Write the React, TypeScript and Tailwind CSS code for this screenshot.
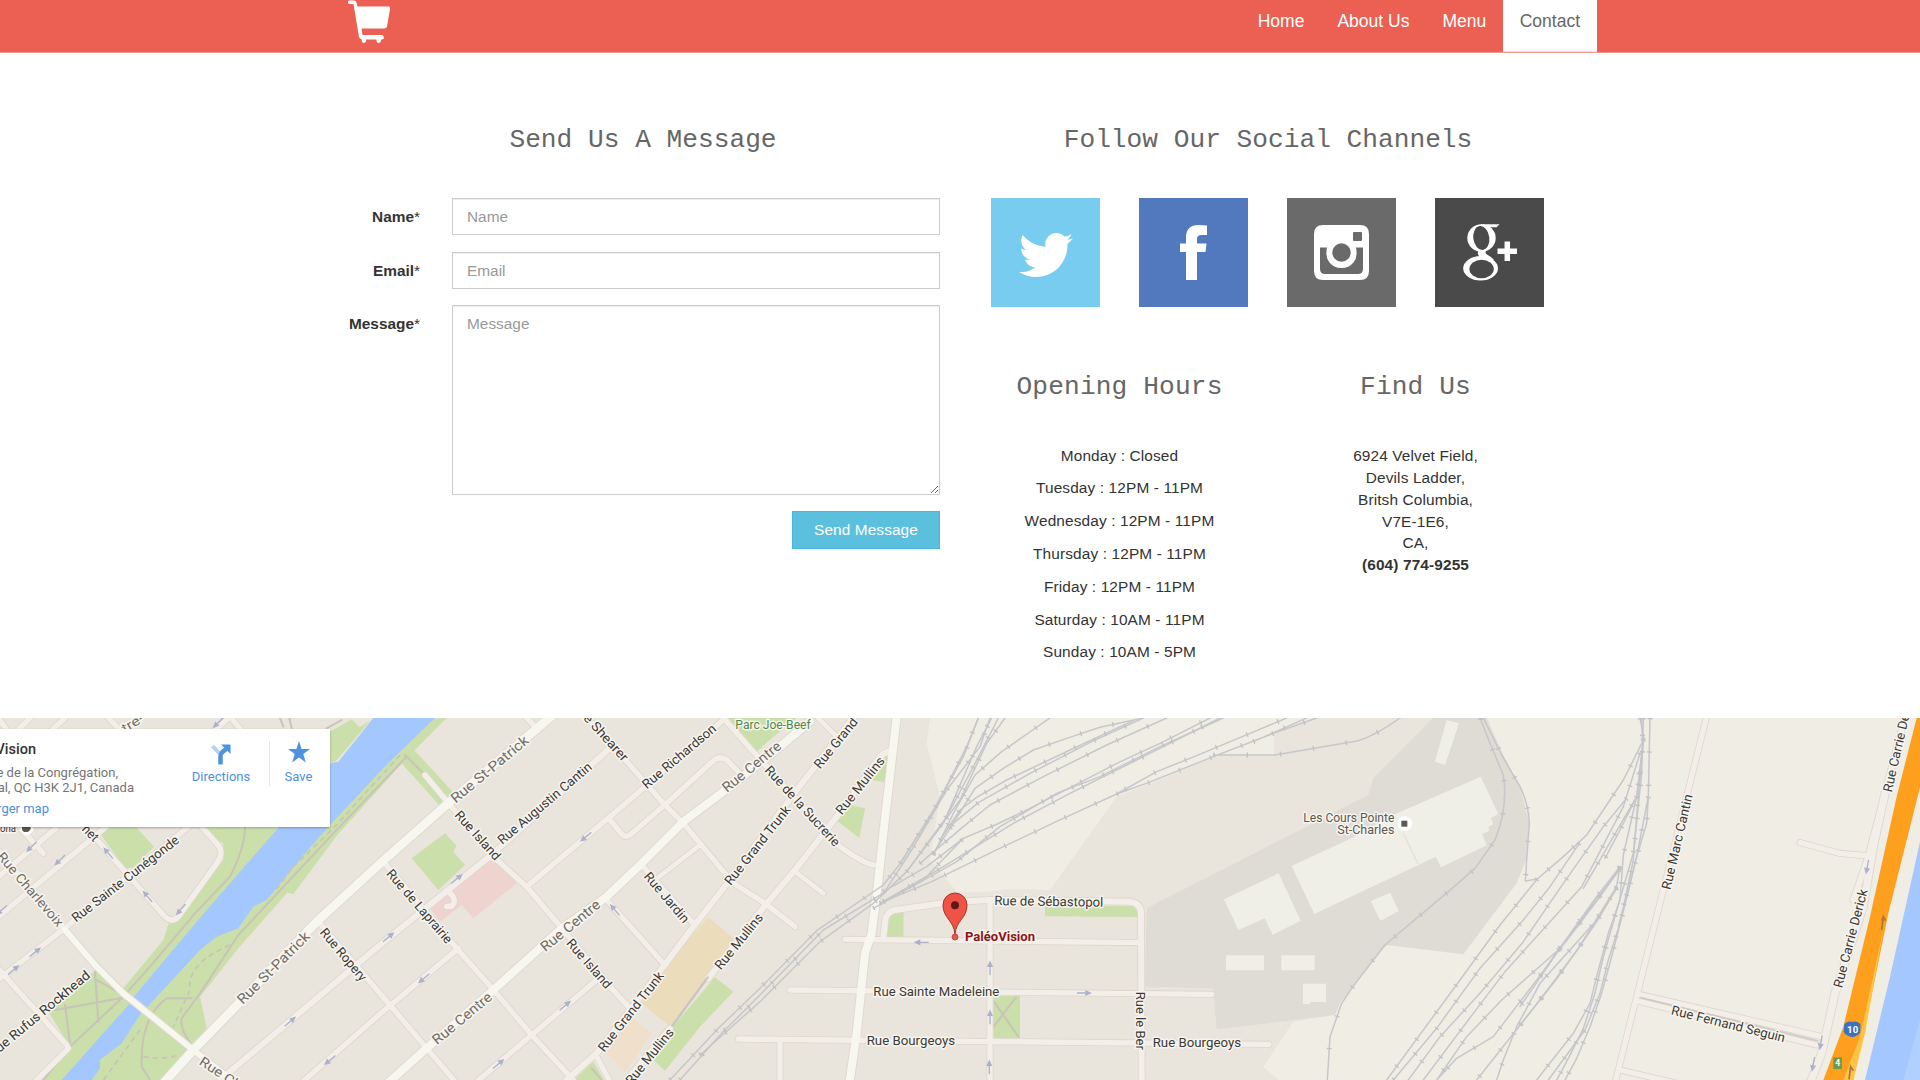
import React from "react";
import { FaTwitter } from "react-icons/fa";

type Shape = { o: number; d: string; w?: number; c?: string };
type LabelSpec = { o: number; t: string; p: [number, number, number, number]; c?: string; s?: number; b?: boolean };

// Map geometry is kept in third-of-a-pixel units; `o` shifts a sheet to the right.
const areas: Shape[] = [
  { o: 0, c: "#cadfaa", d: "M590 383L835 383L1200 60L1340 54L1215 180L1012 405L880 582L862 578L715 745L600 890L620 985L575 1045L490 1140L130 1140L210 1040L145 935L285 812L370 865L490 720L505 672L530 660L670 480L670 430Z" },
  { o: 0, c: "#e9e5dc", d: "M990 54L1118 54L1005 188L990 188Z" },
  { o: 0, c: "#cadfaa", d: "M990 95L1055 58L1078 82L1110 62L1008 183L990 190Z" },
  { o: 0, c: "#cadfaa", d: "M300 400L320 383L410 383L462 440L400 503L375 505Z" },
  { o: 0, c: "#a5c7ff", d: "M1120 54L1305 54L1200 155L1140 215L990 375L915 460L800 600L760 620L715 685L650 710L600 750L420 945L365 1030L300 1080L300 1105L275 1140L185 1140L385 915L410 880L590 665L835 383L990 190L1015 185Z" },
  { o: 1140, c: "#cadfaa", d: "M65 190L100 148L218 275L180 318Z" },
  { o: 1140, c: "#cadfaa", d: "M95 475L195 400L230 437L220 455L255 495L175 570Z" },
  { o: 1140, c: "#efd3cf", d: "M320 465L345 475L410 550L280 655L245 615L180 665L150 625Z" },
  { o: 1140, c: "#ebdcbb", d: "M985 652L1060 715L985 830L870 980L785 910L850 800Z" },
  { o: 1140, c: "#f0dfcb", d: "M745 945L815 1000L735 1117L680 1060Z" },
  { o: 1140, c: "#cadfaa", d: "M1005 832L1060 875L960 980L855 1112L820 1080L870 990Z" },
  { o: 1140, c: "#cadfaa", d: "M580 1140L640 1085L672 1140Z" },
  { o: 2280, c: "#cadfaa", d: "M-95 54L110 54L40 110L-10 155Z" },
  { o: 2280, c: "#cadfaa", d: "M382 165L377 247L330 240Z" },
  { o: 2280, c: "#cadfaa", d: "M270 315L315 325L298 414L228 360Z" },
  { o: 2280, c: "#cadfaa", d: "M385 640L431 633L430 716L378 715Z" },
  { o: 2280, c: "#cadfaa", d: "M855 618L1131 618L1131 651L855 649Z" },
  { o: 2280, c: "#cadfaa", d: "M700 888L780 888L780 1014L700 1014Z" },
  { o: 2280, c: "#f0ede5", d: "M510 54L500 130L540 290L510 480L590 575L690 575L750 566L870 570L1070 290L1180 247L1380 165L1542 165L1542 95L1660 54Z" },
  { o: 3420, c: "#dfdbd5", d: "M880 54L700 235L685 285L20 625L15 860L220 865L230 988L585 945L1000 850L1300 500L1200 54Z" },
  { o: 3420, c: "#f0ede5", d: "M1040 54L1090 165L1140 260L1168 370L1158 480L1130 550L970 763L740 735L600 910L585 945L460 965L370 1100L415 1140L2340 1140L2340 54Z" },
  { o: 3420, c: "#f0efe7", d: "M920 60L957 70L915 195L885 185ZM1022 230L1075 342L1052 355L1060 372L1045 380L1048 392L1026 402L1040 436L903 502L887 470L523 642L455 498L640 412L760 345ZM252 598L416 520L482 662L398 704L374 655L295 690ZM692 604L750 578L776 632L722 662ZM258 766H372V811H258ZM424 766H524V811H424ZM489 851H558V906H510V912H489Z" },
  { o: 4560, c: "#a5c7ff", d: "M1200 425L1110 830L1035 1140L1200 1140Z" },
  { o: 4560, c: "#b2d0ff", d: "M1200 960L1150 1140L1200 1140Z" },
];

const roads: Shape[] = [
  { o: 0, w: 16, d: "M-10 800L200 1035L205 1045L100 1150" },
  { o: 0, w: 16, d: "M-20 850L200 680L590 360" },
  { o: 0, w: 16, d: "M-10 655L330 370" },
  { o: 0, w: 16, d: "M-10 535L170 383" },
  { o: 0, w: 16, d: "M60 383L130 460" },
  { o: 0, w: 16, d: "M230 350L490 645Q515 672 535 650L650 490Q675 455 650 430L600 375" },
  { o: 0, w: 16, d: "M-5 150L90 54M150 95L195 54M325 54L370 100M635 100L690 50L740 110M0 60L20 90" },
  { o: 0, w: 18, d: "M-20 435L195 690" },
  { o: 0, w: 18, d: "M660 1140L1140 735L1480 460L1840 135" },
  { o: 0, w: 16, d: "M880 1170L1140 942L1375 745" },
  { o: 0, w: 16, d: "M955 665L1170 915L1280 1045L1370 1150" },
  { o: 0, w: 16, d: "M1150 485L1370 745L1485 875L1595 1005L1720 1140" },
  { o: 1140, w: 16, d: "M135 225L210 315L345 475L440 560L550 690L690 860L745 920" },
  { o: 1140, w: 16, d: "M205 575Q235 600 215 618L200 620" },
  { o: 1140, w: 16, d: "M440 560L690 350L1030 60" },
  { o: 1140, w: 16, d: "M690 360L725 402Q735 414 750 405L860 310L1000 182Q1020 165 1040 180L1080 220" },
  { o: 1140, w: 16, d: "M600 30L745 190L850 310L910 370L1060 550L1155 610L1245 680" },
  { o: 1140, w: 16, d: "M440 54L475 90" },
  { o: 1140, w: 14, d: "M835 532L960 435" },
  { o: 1140, w: 16, d: "M785 495L940 670" },
  { o: 1140, w: 16, d: "M675 595L850 790" },
  { o: 1140, w: 16, d: "M290 1145L455 1005L650 840" },
  { o: 1140, w: 16, d: "M650 1070L690 1145" },
  { o: 1140, w: 18, d: "M740 1140L870 985" },
  { o: 1140, w: 18, d: "M560 1140L650 1060L850 800L940 680L1050 540L1250 270L1420 54" },
  { o: 2280, w: 18, d: "M-155 835L20 610L105 510L230 350L360 170Q375 155 400 150" },
  { o: 2280, w: 16, d: "M-110 54L20 200L240 440Q310 490 340 495" },
  { o: 2280, w: 14, d: "M105 515L190 580M175 54L230 110" },
  { o: 2280, w: 18, d: "M370 715L376 660Q380 635 405 630L580 605L690 600L1110 605Q1145 610 1143 645L1145 1140" },
  { o: 2280, w: 16, d: "M255 718L1145 728M90 870L1355 883M-65 1017L1527 1033M690 600V1140M60 1020V1140" },
  { o: 4560, w: 16, d: "M560 50L500 290L430 570L285 1150M365 885L905 1010M360 905L890 1035M300 1110L470 1150" },
  { o: 4560, w: 16, d: "M840 428L960 460L1050 468" },
  { o: 4560, w: 18, d: "M1155 50L1095 280L1045 470L1000 600" },
  { o: 4560, w: 22, d: "M1095 280L1060 440L1030 620L945 880L905 1060L870 1150" },
];

const mainRoads: Shape[] = [
  { o: 0, w: 26, d: "M490 1150L580 1050L740 885L950 665L1150 482L1350 305L1660 44" },
  { o: 0, w: 18, d: "M195 690L290 800L370 880L580 1050L700 1145" },
  { o: 1140, w: 24, d: "M0 1170L140 1045L340 870L540 690L680 590L780 495L910 365L1050 260L1200 140L1290 64" },
  { o: 2280, w: 24, d: "M268 1150L290 1000L315 760L335 700L355 540L370 400L410 50" },
];

const rails: Shape[] = [
  { o: 2280, d: "M-270 1140L-125 985L0 865L170 692L370 555L425 485L530 315L620 140L655 54" },
  { o: 2280, d: "M-240 1140L-115 1000L0 885L190 690L372 578L455 450L560 270L660 140L690 54" },
  { o: 2280, d: "M-180 1065L0 905L180 725L340 610L440 515L560 350L640 200L715 54" },
  { o: 2280, d: "M420 490L510 350L610 170L655 54M440 515L550 370L650 140L695 54M500 435L600 300L680 130L735 54" },
  { o: 2280, d: "M520 465L580 340L645 225L725 155L870 54" },
  { o: 2280, d: "M570 385L645 265L730 205L820 150L920 115L1020 82L1150 54" },
  { o: 2280, d: "M540 420L600 330L650 292L740 240L930 150L1120 62" },
  { o: 2280, d: "M520 460L580 370L655 308L810 220L995 125L1150 54" },
  { o: 2280, d: "M480 490L610 380L690 315L850 230L1040 135L1220 54" },
  { o: 2280, d: "M370 605L490 540L610 415L705 375L810 325L1075 188L1200 130L1350 54" },
  { o: 2280, d: "M370 575L500 500L610 415M360 610L550 500L760 370L930 280L1150 170L1380 54" },
  { o: 2280, d: "M340 625L590 485L720 380L890 280L1020 230L1200 140L1390 54" },
  { o: 2280, d: "M370 605L515 545L705 452L895 362L1070 282L1190 215L1290 175L1470 100L1580 54" },
  { o: 2280, d: "M1070 282L1165 248L1360 170L1540 100L1670 54M1360 165L1545 165L1795 122Q1850 105 1920 54M1480 125L1640 54" },
  { o: 3420, d: "M1020 54L1050 130L1090 225Q1105 320 1065 420L1005 505L925 575L770 705L730 740L635 865L605 910L570 1010L562 1140" },
  { o: 3420, d: "M1030 54L1085 165L1140 260Q1165 310 1168 370L1160 480L1156 543L1192 537L1270 470L1340 405L1450 240L1508 125L1505 54" },
  { o: 3420, d: "M1192 537L1080 675L960 840L740 1140M1318 430L1230 560L1150 660L1020 805L890 985L760 1140" },
  { o: 3420, d: "M1460 295L1390 380L1270 550L1150 725L1020 880L900 1010L805 1140" },
  { o: 3420, d: "M1500 160L1450 320L1325 560L1095 815L1000 940L850 1140M1510 120L1490 290L1330 565" },
  { o: 3420, d: "M1440 500L1370 590L1205 820L1060 1010L950 1075L890 1140M1438 510L1255 750L1085 900L980 1010L890 1140" },
  { o: 3420, d: "M1440 500L1430 560L1375 655L1200 850L1130 980L1090 1080L1070 1140M1430 560L1315 745L1200 900L1010 1140" },
  { o: 4560, d: "M360 54L372 115L350 290L310 465L300 600L265 700L235 810L210 910L160 1000L50 1140" },
  { o: 4560, d: "M370 54L365 220L340 460L305 580L250 770L225 880L190 985L145 1075L110 1140" },
  { o: 4560, d: "M390 54L385 290L380 370L350 470L325 575L275 770L245 880L210 980L170 1075L135 1140" },
  { o: 4560, d: "M370 115L350 350L340 480L300 670L265 780L240 880L195 990L85 1140M385 290L350 470L295 680M350 290L300 390L255 475" },
  { o: 4560, d: "M300 505L240 590L180 670L110 760L0 920M290 565L230 665L175 745L115 830L0 975" },
];

const paths: Shape[] = [
  { o: 0, d: "M1220 170L1000 400L715 705L600 880L545 955Q538 985 575 1035" },
  { o: 0, d: "M735 383Q735 440 690 530L585 640L450 800L370 890L210 1040L130 1140" },
  { o: 0, d: "M285 815L295 965M290 840L370 885M165 930L360 895M195 915L210 1030M575 895L500 895Q420 950 425 1100L450 1140" },
  { o: 1140, d: "M75 165L135 225M875 980L985 830M635 1105L665 1140" },
  { o: 2280, d: "M702 905L775 1010M768 892L702 978" },
  { o: 0, d: "M840 54L850 80M868 54L875 85M980 85L1025 60" },
];

const arrows: [number, number, number][] = [
  [655, 68, 135], [95, 440, 135], [180, 480, 135], [325, 460, -130], [443, 590, -130], [543, 628, 130], [105, 757, -40],
  [40, 810, -40], [1165, 712, -40], [870, 965, -40], [990, 1080, 140], [5, 630, 140], [1370, 537, -40], [1272, 835, 140],
  [1758, 410, 140], [1845, 630, -130], [1695, 917, -40], [1495, 1092, -40], [2765, 727, 180], [2970, 805, -90],
  [2970, 952, -90], [2968, 1102, -90], [3252, 879, 0], [5602, 500, 100], [5463, 1027, 100], [5440, 1092, 100],
];

const G = "#716d67";
const labels: LabelSpec[] = [
  { o: 0, t: "Rue Charlevoix", p: [0, 462, 183, 675], c: G, s: 40 },
  { o: 0, t: "Rue Sainte Cunégonde", p: [220, 658, 532, 415] },
  { o: 0, t: "Rue Rufus Rockhead", p: [-30, 1065, 265, 820] },
  { o: 0, t: "Rue St-Patrick", p: [718, 905, 922, 702], c: G, s: 42 },
  { o: 0, t: "Rue Ropery", p: [968, 690, 1093, 838] },
  { o: 0, t: "Rue Charlevoix", p: [602, 1080, 850, 1245], c: G, s: 40 },
  { o: 0, t: "tre-", p: [368, 88, 428, 50], c: G },
  { o: 0, t: "net", p: [253, 380, 290, 418] },
  { o: 0, t: "ona", p: [0, 385, 48, 385], s: 32 },
  { o: 1140, t: "Rue St-Patrick", p: [218, 300, 440, 115], c: G, s: 42 },
  { o: 1140, t: "Rue Island", p: [232, 338, 355, 475] },
  { o: 1140, t: "Rue Augustin Cantin", p: [358, 425, 630, 195] },
  { o: 1140, t: "Rue Shearer", p: [585, 10, 738, 178] },
  { o: 1140, t: "Rue Richardson", p: [792, 258, 1003, 80] },
  { o: 1140, t: "Rue Centre", p: [1032, 268, 1198, 132], c: G, s: 42 },
  { o: 1140, t: "Rue Centre", p: [487, 746, 655, 608], c: G, s: 42 },
  { o: 1140, t: "Rue Centre", p: [162, 1025, 330, 885], c: G, s: 42 },
  { o: 1140, t: "Rue de Laprairie", p: [27, 513, 210, 725] },
  { o: 1140, t: "Rue Jardin", p: [800, 522, 920, 663] },
  { o: 1140, t: "Rue Island", p: [567, 722, 688, 860] },
  { o: 1140, t: "Rue Grand Trunk", p: [662, 1050, 843, 820] },
  { o: 1140, t: "Rue Mullins", p: [745, 1148, 873, 990] },
  { o: 1140, t: "Rue Mullins", p: [1012, 803, 1141, 645] },
  { o: 1140, t: "Rue Grand Trunk", p: [1042, 550, 1223, 322] },
  { o: 1140, t: "Parc Joe-Beef", p: [1066, 74, 1292, 74], c: "#4f8a4a" },
  { o: 2280, t: "Rue Grand", p: [170, 200, 285, 58] },
  { o: 2280, t: "Rue Mullins", p: [235, 338, 366, 175] },
  { o: 2280, t: "Rue de la Sucrerie", p: [22, 203, 233, 433] },
  { o: 2280, t: "Rue de Sébastopol", p: [703, 602, 1030, 607] },
  { o: 2280, t: "PaléoVision", p: [615, 710, 825, 710], c: "#8f1414", b: true },
  { o: 2280, t: "Rue Sainte Madeleine", p: [340, 875, 718, 875] },
  { o: 2280, t: "Rue Bourgeoys", p: [320, 1022, 585, 1022] },
  { o: 2280, t: "Rue le Ber", p: [1140, 875, 1140, 1050] },
  { o: 3420, t: "Les Cours Pointe", p: [490, 352, 763, 352], c: "#5d5852" },
  { o: 3420, t: "St-Charles", p: [592, 388, 763, 388], c: "#5d5852" },
  { o: 3420, t: "Rue Bourgeoys", p: [38, 1029, 303, 1029] },
  { o: 4560, t: "Rue Marc Cantin", p: [438, 568, 505, 283] },
  { o: 4560, t: "Rue Carrie Derick", p: [953, 862, 1030, 568] },
  { o: 4560, t: "Rue Carrie Derick", p: [1102, 275, 1170, -20] },
  { o: 4560, t: "Rue Fernand Seguin", p: [455, 930, 795, 1014] },
];

function Label({ o, t, p, c = "#3d3934", s = 39, b }: LabelSpec) {
  const [x1, y1, x2, y2] = p;
  const len = Math.hypot(x2 - x1, y2 - y1);
  const angle = (Math.atan2(y2 - y1, x2 - x1) * 180) / Math.PI;
  return (
    <text
      transform={`translate(${o + x1} ${y1}) rotate(${angle})`}
      y={s * 0.34}
      fontSize={s}
      fontWeight={b ? 700 : 400}
      textLength={len}
      lengthAdjust="spacingAndGlyphs"
      fill={c}
      stroke="#f7f5f0"
      strokeWidth={9}
      strokeLinejoin="round"
      paintOrder="stroke"
    >
      {t}
    </text>
  );
}

function Strokes({ items, color, extra = 0, width }: { items: Shape[]; color: string; extra?: number; width?: number }) {
  return (
    <g fill="none" stroke={color} strokeLinecap="round" strokeLinejoin="round">
      {items.map((r, i) => (
        <path key={i} d={r.d} transform={`translate(${r.o} 0)`} strokeWidth={(width ?? r.w ?? 16) + extra} />
      ))}
    </g>
  );
}

function CityMap() {
  return (
    <svg className="block h-[362px] w-[1920px] font-['Roboto',sans-serif]" viewBox="0 54 5760 1086">
      <rect y="54" width="5760" height="1086" fill="#e9e5dc" />
      {areas.map((a, i) => (
        <path key={i} d={a.d} fill={a.c} transform={`translate(${a.o} 0)`} />
      ))}
      <path d="M4210 400L4254 492" stroke="#dfdbd5" strokeWidth="3" />
      <Strokes items={paths} color="#c9c3b9" width={6} />
      <g fill="none" stroke="#c9c3b5" strokeWidth="5" strokeDasharray="16 12">
        <path d="M1200 165L1000 385L880 500L820 580M690 735Q560 790 570 870L520 980M420 990L310 1140M430 1070Q490 1080 540 1065" />
      </g>
      <Strokes items={roads} color="#ddd7cf" extra={5} />
      <Strokes items={mainRoads} color="#dedad0" extra={6} />
      <Strokes items={roads} color="#f4eee9" />
      <Strokes items={mainRoads} color="#f7f7f0" />
      <path d="M2015 980L2125 830" stroke="#c9c6c2" strokeWidth="6" />
      <Strokes items={rails} color="#c6c7ca" width={4.5} />
      <g fill="none" stroke="#c0c2c6" strokeWidth="15" strokeDasharray="4 96">
        {rails.map((r, i) => (
          <path key={i} d={r.d} transform={`translate(${r.o} 0)`} />
        ))}
      </g>
      <path d="M4922 893L5455 1023" stroke="#cfcac5" strokeWidth="5" />
      <path d="M5750 54H5760V262L5665 640L5620 860L5560 1140H5470L5530 980L5610 650L5690 290Z" fill="#ff9f1e" />
      <path d="M5652 680L5580 1010L5530 1140H5560L5595 1000Z" fill="#ffc345" />
      <g fill="#acb2cb" stroke="#acb2cb" strokeWidth="4">
        {arrows.map(([x, y, r], i) => (
          <path key={i} d="M-21 0H8M6 -6L19 0L6 6Z" transform={`translate(${x} ${y}) rotate(${r})`} />
        ))}
      </g>
      <path d="M5645 690L5650 650L5657 662M5645 662L5650 650M5547 1138L5552 1100L5560 1112" fill="none" stroke="#a87838" strokeWidth="5" />
      {labels.map((l, i) => (
        <Label key={i} {...l} />
      ))}
      <circle cx="80" cy="385" r="20" fill="#fff" />
      <path d="M66 380H92V386Q88 396 78 396Q66 396 66 386Z" fill="#5d5852" />
      <circle cx="4214" cy="371" r="22" fill="#fff" />
      <rect x="4204" y="362" width="18" height="18" fill="#5d5852" />
      <path d="M5533 972Q5545 962 5557 966Q5570 962 5581 972V996Q5578 1006 5557 1012Q5536 1006 5531 996Z" fill="#3b72c0" />
      <text x="5558" y="999" fontSize="29" fontWeight="700" fill="#fff" textAnchor="middle">10</text>
      <rect x="5500" y="1072" width="26" height="35" fill="#6c9b53" />
      <text x="5513" y="1099" fontSize="26" fontWeight="700" fill="#fff" textAnchor="middle">4</text>
      <circle cx="2865" cy="711" r="9" fill="#ef5346" stroke="#a8322a" strokeWidth="2" />
      <path d="M2865 702C2861 660 2829 655 2829 615A36 36 0 0 1 2901 615C2901 655 2869 660 2865 702Z" fill="#ef5346" stroke="#a8322a" strokeWidth="3" />
      <circle cx="2865" cy="616" r="12" fill="#5c1a17" />
    </svg>
  );
}

function PlaceCard() {
  return (
    <div className="absolute left-0 top-[11px] flex h-[98px] w-[330px] bg-white font-['Roboto',sans-serif] shadow-[0_1px_2px_rgba(0,0,0,0.3)]">
      <div className="flex w-[134px] flex-col items-start whitespace-nowrap text-[13px] leading-[15.3px] text-[#757575]">
        <div className="mt-[12px] flex w-[36px] justify-end text-[14.5px] font-medium leading-[18px] text-[#333]">Vision</div>
        <div className="mt-[6px] flex w-[118px] justify-end">e de la Congrégation,</div>
        <div className="flex w-[134px] justify-end">al, QC H3K 2J1, Canada</div>
        <div className="mt-[5px] flex w-[49px] justify-end text-[#4d8fe0]">rger map</div>
      </div>
      <div className="ml-[52px] mt-[14px] flex w-[70px] flex-col items-center text-[13px] leading-[15px] text-[#4d8fe0]">
        <svg className="h-[22px] w-[20px]" viewBox="0 0 20 22" fill="none">
          <path d="M1.500 3L9 11" stroke="#b5d0f3" strokeWidth="4" />
          <path d="M9.500 21.500V13Q9.500 11 11 9.500L15 6" stroke="#4f93e0" strokeWidth="4.500" />
          <path d="M10 1.500H19.500V11Z" fill="#4f93e0" />
        </svg>
        <div className="mt-[4px]">Directions</div>
      </div>
      <div className="ml-[13px] mt-[12px] h-[45px] w-px bg-[#e5e5e5]" />
      <div className="mt-[12px] flex w-[57px] flex-col items-center text-[13px] leading-[15px] text-[#4d8fe0]">
        <svg className="h-[22px] w-[22px]" viewBox="0 0 22 22">
          <path d="M11 0L13.600 8H22L15.300 13L17.800 21.500L11 16.400L4.200 21.500L6.700 13L0 8H8.400Z" fill="#4f93e0" />
        </svg>
        <div className="mt-[6px]">Save</div>
      </div>
    </div>
  );
}

function Heading({ children }: { children: React.ReactNode }) {
  return (
    <h2 className="whitespace-nowrap text-center font-['Liberation_Mono',monospace] text-[26.2px] font-normal leading-[30px] text-[#666]">
      {children}
    </h2>
  );
}

const field = "w-[488px] border border-[#ccc] bg-white px-[14px] text-[15.4px] shadow-[inset_0_1px_1px_rgba(0,0,0,0.075)] placeholder:text-[#999]";

function FieldLabel({ children }: { children: React.ReactNode }) {
  return (
    <label className="mr-[32px] w-[86px] whitespace-nowrap pt-[7.500px] text-right text-[15.4px] font-bold leading-[22px] text-[#333]">
      {children}
      <span className="font-normal">*</span>
    </label>
  );
}

const hours = [
  "Monday : Closed",
  "Tuesday : 12PM - 11PM",
  "Wednesday : 12PM - 11PM",
  "Thursday : 12PM - 11PM",
  "Friday : 12PM - 11PM",
  "Saturday : 10AM - 11PM",
  "Sunday : 10AM - 5PM",
];

const tile = "flex h-[109px] w-[109px] items-center justify-center text-white";

export default function App() {
  return (
    <div className="h-[1080px] w-[1920px] overflow-hidden bg-white font-['Liberation_Sans',Arial,sans-serif]">
      <header className="flex h-[53px] justify-between border-b border-[#f29a8d] bg-[#eb6053] pl-[347px] pr-[323px]">
        <svg className="h-[44px] w-[44px]" viewBox="0 0 44 44" fill="#fff">
          <path d="M2 .5H7Q9 .5 9.500 2.500L10.500 6.500H41.500Q43.500 6.500 43 9L40 26.500Q39.500 28.500 37 28.500H14.500L15.500 35H35Q37 35.500 37 37.500T35 39.500H34V41Q33.500 43 31.700 43T29.500 41V39.500H19V41Q18.500 43 16.800 43T14.700 41V39.300Q12.500 39 12 37L6.500 4H2Q1 3.500 1 2.200T2 .5Z" />
        </svg>
        <nav className="flex text-[17.5px] leading-[22px] text-white">
          <a className="px-[16.5px] pt-[10px]">Home</a>
          <a className="px-[16.5px] pt-[10px]">About Us</a>
          <a className="px-[16.5px] pt-[10px]">Menu</a>
          <a className="h-[52px] border-b border-[#fbd9d4] bg-white px-[17px] pt-[10px] text-[#666]">Contact</a>
        </nav>
      </header>

      <main className="flex h-[665px] pl-[334px] pt-[72px]">
        <section className="w-[618px]">
          <Heading>Send Us A Message</Heading>
          <form className="mt-[43px] flex flex-col">
            <div className="flex">
              <FieldLabel>Name</FieldLabel>
              <input className={`${field} h-[37px]`} placeholder="Name" />
            </div>
            <div className="mt-[17px] flex">
              <FieldLabel>Email</FieldLabel>
              <input className={`${field} h-[37px]`} placeholder="Email" />
            </div>
            <div className="mt-[16px] flex">
              <FieldLabel>Message</FieldLabel>
              <textarea className={`${field} h-[190px] resize py-[7px] leading-[22px]`} placeholder="Message" />
            </div>
            <button type="button" className="ml-[458px] mt-[16px] h-[38px] w-[148px] border border-[#46b8da] bg-[#5bc0de] text-[15.4px] tracking-[0.1px] text-white">
              Send Message
            </button>
          </form>
        </section>

        <section className="w-[632px]">
          <Heading>Follow Our Social Channels</Heading>
          <div className="ml-[39px] mt-[43px] flex gap-[39px]">
            <div className={`${tile} bg-[#77ccf0]`}>
              <FaTwitter className="mt-[4px] h-[54px] w-[54px]" />
            </div>
            <div className={`${tile} bg-[#5279be]`}>
              <svg className="h-[55px] w-[27px]" viewBox="0 0 27 55" fill="currentColor">
                <path d="M27 .4V10H21.500Q17 10 17 14V18.500H26.500L25.500 27H17V55H6V27H0V18.500H6V12.500Q6 0 18.500 0Z" />
              </svg>
            </div>
            <div className={`${tile} bg-[#6a6a6a]`}>
              <svg className="h-[55px] w-[55px]" viewBox="0 0 55 55" fill="none">
                <path fill="#fff" fillRule="evenodd" d="M9 0H46Q55 0 55 9V46Q55 55 46 55H9Q0 55 0 46V9Q0 0 9 0ZM40 7Q39 7 39 8V15Q39 16 40 16H47Q48 16 48 15V8Q48 7 47 7ZM6 22.500V44Q6 49 11 49H44Q49 49 49 44V22.500H42Q44 32 39.500 37.500Q35 43 27.500 43T15.500 37.500Q11 32 13 22.500Z" />
                <circle cx="27.500" cy="27.500" r="9.200" fill="#6a6a6a" />
              </svg>
            </div>
            <div className={`${tile} bg-[#4a4a4a]`}>
              <svg className="h-[57px] w-[54px]" viewBox="0 0 54 57" fill="#fff">
                <ellipse cx="18.500" cy="14" rx="14.200" ry="13.800" />
                <path d="M18 .2H36.500L33.500 3.300H27L18 2Z" />
                <path d="M16 26Q13 29.500 17 33L26 39L31 36Q28 32.500 24 30.500Q21 28.500 24 25.500Z" />
                <ellipse cx="17.600" cy="44.300" rx="17.400" ry="12.200" />
                <ellipse cx="18.300" cy="14" rx="8" ry="12" transform="rotate(-8 18.3 14)" fill="#4a4a4a" />
                <ellipse cx="18.600" cy="45" rx="12.200" ry="9.200" fill="#4a4a4a" />
                <path d="M34.500 27.200H54M44.300 17.500V37" stroke="#fff" strokeWidth="5.500" />
              </svg>
            </div>
          </div>
          <div className="ml-[19.5px] mt-[65px] flex text-center text-[15.4px] tracking-[0.13px] text-[#333]">
            <div className="w-[296px]">
              <Heading>Opening Hours</Heading>
              <ul className="mt-[37px]">
                {hours.map((h) => (
                  <li key={h} className="h-[32.8px] pt-[5.600px] leading-[22px]">{h}</li>
                ))}
              </ul>
            </div>
            <div className="w-[296px]">
              <Heading>Find Us</Heading>
              <address className="mt-[42.800px] not-italic leading-[21.900px]">
                6924 Velvet Field,
                <br />
                Devils Ladder,
                <br />
                Britsh Columbia,
                <br />
                V7E-1E6,
                <br />
                CA,
                <br />
                <strong>(604) 774-9255</strong>
              </address>
            </div>
          </div>
        </section>
      </main>

      <div className="relative h-[362px] overflow-hidden">
        <CityMap />
        <PlaceCard />
      </div>
    </div>
  );
}
